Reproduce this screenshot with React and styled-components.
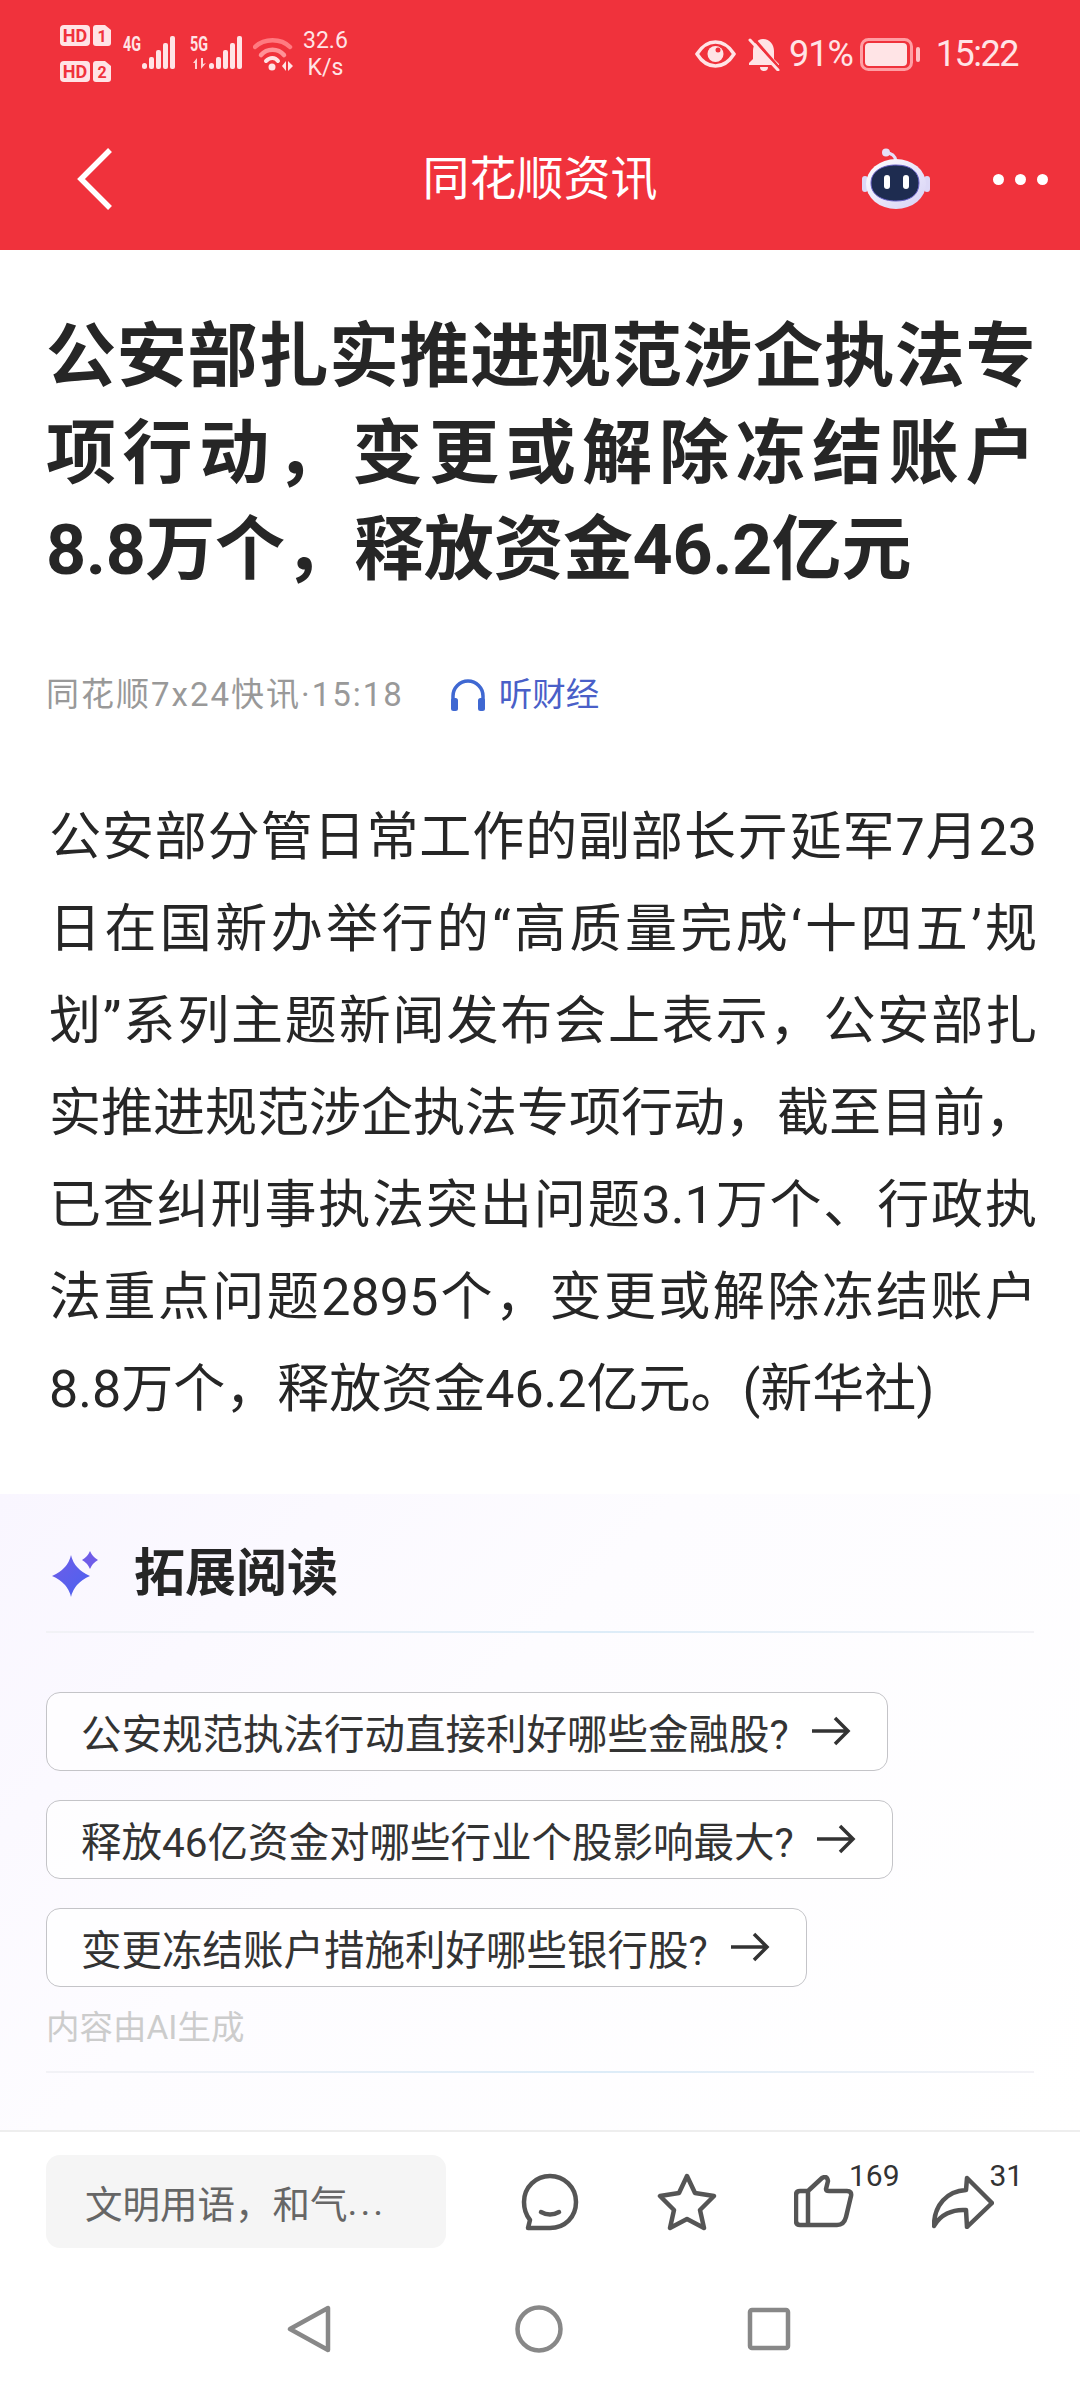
import styled, {createGlobalStyle} from "styled-components";

const GlobalStyle = createGlobalStyle`
  html, body {
    margin: 0;
    padding: 0;
    background: #fff;
  }
  * {
    box-sizing: border-box;
  }
`;

const FONT = `Roboto, "Noto Sans CJK SC", sans-serif`;

const Page = styled.div`
  display: flex;
  flex-direction: column;
  width: 1080px;
  height: 2388px;
  overflow: hidden;
  background: #fff;
  font-family: ${FONT};
`;

const Header = styled.header`
  display: flex;
  flex-direction: column;
  height: 250px;
  flex-shrink: 0;
  background: #f0323c;
  color: #fff;
`;

const StatusBar = styled.div`
  display: flex;
  justify-content: space-between;
  align-items: center;
  height: 108px;
  padding: 0 62px 0 60px;
  color: #ffe4e6;
`;

const StatusGroup = styled.div`
  display: flex;
  align-items: center;
  gap: ${(props) => props.gap || 0}px;
  margin-left: ${(props) => props.left || 0}px;
  margin-right: ${(props) => props.right || 0}px;
`;

const SignalGroup = styled.div`
  display: flex;
  align-items: center;
  gap: 13px;
  margin: 0 0 8px 12px;
`;

const SimStack = styled.div`
  display: flex;
  flex-direction: column;
  gap: 14px;
`;

const SpeedText = styled.div`
  display: flex;
  flex-direction: column;
  align-items: center;
  margin-left: 10px;
  font-size: 23px;
  line-height: 27px;
`;

const StatusText = styled.span`
  font-size: 36px;
  line-height: 40px;
  letter-spacing: ${(props) => props.spacing || 0}px;
`;

const NavBar = styled.nav`
  display: grid;
  grid-template-columns: 1fr auto 1fr;
  align-items: center;
  height: 142px;
  padding: 0 32px;
`;

const BackButton = styled.div`
  display: flex;
  padding-left: 45px;
`;

const NavTitle = styled.div`
  font-size: 47px;
  line-height: 60px;
`;

const NavRight = styled.div`
  display: flex;
  align-items: center;
  justify-content: flex-end;
  gap: 63px;
`;

const Dots = styled.div`
  display: flex;
  gap: 11px;
`;

const Dot = styled.span`
  width: 11px;
  height: 11px;
  border-radius: 50%;
  background: #fff;
`;

const Article = styled.article`
  padding: 59px 45px 58px 46px;
`;

const Title = styled.h1`
  margin: 0;
  font-size: 70px;
  line-height: 96.5px;
  font-weight: 700;
  letter-spacing: -0.4px;
  color: #262626;
  text-align: justify;
`;

const Meta = styled.div`
  display: flex;
  align-items: center;
  margin-top: 76px;
  font-size: 33px;
  line-height: 40px;
  color: #999;
`;

const MetaSource = styled.span`
  letter-spacing: 2px;
`;

const Listen = styled.div`
  display: flex;
  align-items: center;
  gap: 13px;
  margin-left: 46px;
  font-size: 33.5px;
  color: #4a5fc8;
`;

const Body = styled.p`
  margin: 77px -2px 0 3px;
  font-size: 52px;
  line-height: 92px;
  color: #262626;
  text-align: justify;
`;

const Extended = styled.section`
  flex: 1;
  padding: 0 46px;
  background: linear-gradient(135deg, #f9f6ff 0%, #fdfcff 40%, #fff 100%);
`;

const ExtendedHead = styled.div`
  display: flex;
  align-items: center;
  height: 137px;
  gap: 36px;
  padding-left: 6px;
  padding-top: 23px;
`;

const ExtendedTitle = styled.h2`
  margin: 0;
  font-size: 51px;
  line-height: 60px;
  font-weight: 700;
  color: #262626;
`;

const GlowLine = styled.div`
  height: 2px;
  background: linear-gradient(90deg, #f2f2f6 0%, #dcecf8 55%, #f2f2f6 100%);
`;

const Chips = styled.div`
  display: flex;
  flex-direction: column;
  align-items: flex-start;
  gap: 29px;
  margin-top: 59px;
`;

const Chip = styled.div`
  display: flex;
  align-items: center;
  gap: 22px;
  height: 79px;
  padding: 0 36px 0 34px;
  border: 1.5px solid #c4c4c8;
  border-radius: 14px;
  font-size: 40.5px;
  color: #333;
  background: rgba(255, 255, 255, 0.7);
`;

const AiNote = styled.div`
  margin: 21px 0 23px;
  font-size: 33.5px;
  line-height: 40px;
  color: #ccc;
`;

const BottomBar = styled.div`
  display: flex;
  align-items: flex-start;
  height: 140px;
  padding: 23px 0 0 46px;
  border-top: 2px solid #eee;
  flex-shrink: 0;
`;

const CommentInput = styled.div`
  display: flex;
  align-items: center;
  width: 400px;
  height: 93px;
  padding-left: 39px;
  border-radius: 14px;
  background: #f5f5f5;
  font-size: 37.5px;
  color: #666;
`;

const Ellipsis = styled.span`
  letter-spacing: 3px;
`;

const Actions = styled.div`
  display: flex;
  align-items: center;
  height: 93px;
  margin-left: 75px;
  gap: 77.5px;
`;

const Action = styled.div`
  position: relative;
  display: flex;
`;

const Count = styled.span`
  position: absolute;
  left: ${(props) => props.left}px;
  top: -16px;
  font-size: 30px;
  line-height: 34px;
  color: #333;
`;

const SystemNav = styled.div`
  display: flex;
  align-items: center;
  justify-content: center;
  gap: 184px;
  height: 118px;
  padding-right: 3px;
  flex-shrink: 0;
`;

function HdBadge({n}) {
    return (
        <svg width="51" height="22" viewBox="0 0 51 22" style={{display: "block"}}>
            <rect x="0" y="0" width="30" height="21" rx="4" fill="#ffe4e6"/>
            <text x="15" y="17" textAnchor="middle" fontFamily="Roboto" fontWeight="700" fontSize="18" fill="#f0323c">HD</text>
            <path d="M36 0h9l6 5v13a3 3 0 0 1-3 3H36a3 3 0 0 1-3-3V3a3 3 0 0 1 3-3z" fill="#ffe4e6"/>
            <text x="42" y="17" textAnchor="middle" fontFamily="Roboto" fontWeight="700" fontSize="16" fill="#f0323c">{n}</text>
        </svg>
    );
}

function Signal({label, arrows}) {
    return (
        <svg width="54" height="37" viewBox="0 -4 54 37">
            <text x="0" y="15" fontFamily="Roboto" fontWeight="700" fontSize="20" textLength="18" lengthAdjust="spacingAndGlyphs" fill="#ffe4e6">{label}</text>
            {arrows && <path d="M3 27l4-5v11H5v-6zM11 22h2v6l3-1-5 6z" fill="#ffe4e6" opacity="0.9"/>}
            <rect x="19" y="27" width="5" height="6" rx="2.5" fill="#ffe4e6"/>
            <rect x="26" y="21" width="5" height="12" rx="2" fill="#ffe4e6"/>
            <rect x="33" y="14" width="5" height="19" rx="2" fill="#ffe4e6"/>
            <rect x="40" y="7" width="5" height="26" rx="2" fill="#ffe4e6"/>
            <rect x="47" y="0" width="5" height="33" rx="2" fill="#ffe4e6"/>
        </svg>
    );
}

function Wifi() {
    return (
        <svg width="40" height="34" viewBox="0 0 40 34" fill="none">
            <path d="M2 10C11 1 28 1 37 10" stroke="#ff7a80" strokeWidth="4.5" strokeLinecap="round"/>
            <path d="M8 18C14 11 25 11 31 18" stroke="#ff9297" strokeWidth="4.5" strokeLinecap="round"/>
            <path d="M13 24C17 20 22 20 25 24" stroke="#ffe4e6" strokeWidth="4" strokeLinecap="round"/>
            <circle cx="19" cy="30" r="3.5" fill="#ffe4e6"/>
            <path d="M29 29l4-5v10zM35 24l5 5-5 5z" fill="#ffe4e6"/>
        </svg>
    );
}

function Eye() {
    return (
        <svg width="41" height="28" viewBox="0 0 41 28" fill="none">
            <path d="M2 14C7 6 13 2 20.5 2S34 6 39 14c-5 8-11 12-18.500 12S7 22 2 14z" stroke="#ffe4e6" strokeWidth="3.5"/>
            <circle cx="20.500" cy="14" r="8" fill="#ffe4e6"/>
            <circle cx="23" cy="10" r="2.500" fill="#f0323c"/>
        </svg>
    );
}

function Bell() {
    return (
        <svg width="32" height="33" viewBox="0 0 32 33" fill="none">
            <path d="M15 1c7 0 11 6 11 12v8l5 5v1H1v-2l4-4v-8C5 7 9 1 15 1z" fill="#ffe4e6"/>
            <path d="M12 29h8a4 4 0 0 1-8 0z" fill="#ffe4e6"/>
            <path d="M6 1l25 29" stroke="#f0323c" strokeWidth="3"/>
            <path d="M2 2l28 30" stroke="#ffe4e6" strokeWidth="3" strokeLinecap="round"/>
        </svg>
    );
}

function Battery() {
    return (
        <svg width="61" height="33" viewBox="0 0 61 33" fill="none">
            <rect x="1.500" y="1.500" width="50" height="30" rx="7" stroke="#ff9ea3" strokeWidth="3"/>
            <rect x="5" y="5" width="42" height="23" rx="4" fill="#ffe4e6"/>
            <rect x="56" y="9" width="4" height="15" rx="2" fill="#ffc2c5"/>
        </svg>
    );
}

function Back() {
    return (
        <svg width="36" height="64" viewBox="0 0 36 64" fill="none">
            <path d="M33 3L4 32l29 29" stroke="#fff" strokeWidth="5.500"/>
        </svg>
    );
}

function Robot() {
    return (
        <svg width="68" height="62" viewBox="0 0 68 62">
            <defs>
                <linearGradient id="shell" x1="0" y1="0" x2="1" y2="1">
                    <stop offset="0" stopColor="#ffffff"/>
                    <stop offset="1" stopColor="#d5d0f5"/>
                </linearGradient>
            </defs>
            <path d="M24 5c5 0 9 2 10 8" fill="none" stroke="#e6dff8" strokeWidth="3"/>
            <circle cx="24" cy="4.500" r="4" fill="#e6dff8"/>
            <rect x="0" y="28" width="6" height="16" rx="3" fill="#dcd8f6"/>
            <rect x="62" y="28" width="6" height="16" rx="3" fill="#dcd8f6"/>
            <ellipse cx="34" cy="36" rx="30" ry="25" fill="url(#shell)"/>
            <path d="M34 17c15 0 23 7 23 18 0 12-9 18-23 18S9 47 9 35c0-11 10-18 25-18z" fill="#1e2c50" stroke="#6a62c8" strokeWidth="1"/>
            <rect x="22" y="27" width="6" height="14" rx="3" fill="#fff"/>
            <rect x="41" y="27" width="6" height="14" rx="3" fill="#fff"/>
        </svg>
    );
}

function Headphones() {
    return (
        <svg width="36" height="34" viewBox="0 0 36 34" fill="none">
            <path d="M3 24V18a15 15 0 0 1 30 0v6" stroke="#3f68d2" strokeWidth="3.500"/>
            <rect x="1" y="20" width="7" height="13" rx="2.500" fill="#3f68d2"/>
            <rect x="28" y="20" width="7" height="13" rx="2.500" fill="#3f68d2"/>
        </svg>
    );
}

function Sparkle() {
    return (
        <svg width="46" height="46" viewBox="0 0 46 46">
            <defs>
                <linearGradient id="spark" x1="0" y1="0" x2="1" y2="1">
                    <stop offset="0" stopColor="#6f5ce8"/>
                    <stop offset="1" stopColor="#4a63f0"/>
                </linearGradient>
            </defs>
            <path d="M19 4q3 14 19 21-16 7-19 21-3-14-19-21 16-7 19-21z" fill="url(#spark)"/>
            <path d="M38 0q2.500 6 8 9-5.500 3-8 9-2.500-6-8-9 5.500-3 8-9z" fill="#6f5ce8"/>
        </svg>
    );
}

function Arrow() {
    return (
        <svg width="40" height="32" viewBox="0 0 40 32" fill="none">
            <path d="M1 16h36M24 3l13 13-13 13" stroke="#333" strokeWidth="3.500"/>
        </svg>
    );
}

function CommentIcon() {
    return (
        <svg width="58" height="58" viewBox="0 0 58 58" fill="none" stroke="#555" strokeWidth="4.500" strokeLinecap="round" strokeLinejoin="round">
            <path d="M29 3c14 0 26 11 26 26S44 55 29 55H7l2-8C5 42 3 36 3 29 3 14 15 3 29 3z"/>
            <path d="M20 39q9 5 18 0"/>
        </svg>
    );
}

function StarIcon() {
    return (
        <svg width="60" height="58" viewBox="0 0 60 58" fill="none" stroke="#555" strokeWidth="4.500" strokeLinejoin="round">
            <path d="M30 3l8 17 19 3-14 14 4 18-17-9-17 9 4-18L3 23l19-3z"/>
        </svg>
    );
}

function ThumbIcon() {
    return (
        <svg width="60" height="54" viewBox="0 0 60 54" fill="none" stroke="#555" strokeWidth="4.500" strokeLinejoin="round">
            <path d="M14 16L28 3q5-3 6 3l-2 8q0 2 3 2h18q5 0 4 5l-5 21q-2 8-9 8H6q-4 0-4-4V20q0-4 4-4h8zM14 16v34"/>
        </svg>
    );
}

function ShareIcon() {
    return (
        <svg width="62" height="54" viewBox="0 0 62 54" fill="none" stroke="#555" strokeWidth="4.500" strokeLinejoin="round">
            <path d="M35 3l25 25-25 24-1-17C20 34 8 40 2 51 2 30 15 16 34 15z"/>
        </svg>
    );
}

function NavBack() {
    return (
        <svg width="44" height="48" viewBox="0 0 44 48" fill="none" stroke="#888" strokeWidth="4.500" strokeLinejoin="round">
            <path d="M41 3v42L3 24z"/>
        </svg>
    );
}

function NavHome() {
    return (
        <svg width="48" height="48" viewBox="0 0 48 48" fill="none" stroke="#888" strokeWidth="4.500">
            <circle cx="24" cy="24" r="21.500"/>
        </svg>
    );
}

function NavRecent() {
    return (
        <svg width="44" height="44" viewBox="0 0 44 44" fill="none" stroke="#888" strokeWidth="4.500">
            <rect x="3" y="3" width="38" height="38" rx="2"/>
        </svg>
    );
}

const questions = [
    "公安规范执法行动直接利好哪些金融股?",
    "释放46亿资金对哪些行业个股影响最大?",
    "变更冻结账户措施利好哪些银行股?",
];

export default function App() {
    return (
        <Page>
            <GlobalStyle/>
            <Header>
                <StatusBar>
                    <StatusGroup>
                        <SimStack>
                            <HdBadge n="1"/>
                            <HdBadge n="2"/>
                        </SimStack>
                        <SignalGroup>
                            <Signal label="4G"/>
                            <Signal label="5G" arrows/>
                        </SignalGroup>
                        <StatusGroup left={9}><Wifi/></StatusGroup>
                        <SpeedText>
                            <span>32.6</span>
                            <span>K/s</span>
                        </SpeedText>
                    </StatusGroup>
                    <StatusGroup>
                        <Eye/>
                        <StatusGroup left={12}><Bell/></StatusGroup>
                        <StatusGroup left={9} right={7}><StatusText spacing={-1}>91%</StatusText></StatusGroup>
                        <Battery/>
                        <StatusGroup left={15}><StatusText spacing={-1.5}>15:22</StatusText></StatusGroup>
                    </StatusGroup>
                </StatusBar>
                <NavBar>
                    <BackButton><Back/></BackButton>
                    <NavTitle>同花顺资讯</NavTitle>
                    <NavRight>
                        <Robot/>
                        <Dots>
                            <Dot/>
                            <Dot/>
                            <Dot/>
                        </Dots>
                    </NavRight>
                </NavBar>
            </Header>
            <Article>
                <Title>公安部扎实推进规范涉企执法专项行动，变更或解除冻结账户8.8万个，释放资金46.2亿元</Title>
                <Meta>
                    <MetaSource>同花顺7x24快讯·15:18</MetaSource>
                    <Listen>
                        <Headphones/>
                        <span>听财经</span>
                    </Listen>
                </Meta>
                <Body>公安部分管日常工作的副部长亓延军7月23日在国新办举行的“高质量完成‘十四五’规划”系列主题新闻发布会上表示，公安部扎实推进规范涉企执法专项行动，截至目前，已查纠刑事执法突出问题3.1万个、行政执法重点问题2895个，变更或解除冻结账户8.8万个，释放资金46.2亿元。(新华社)</Body>
            </Article>
            <Extended>
                <ExtendedHead>
                    <Sparkle/>
                    <ExtendedTitle>拓展阅读</ExtendedTitle>
                </ExtendedHead>
                <GlowLine/>
                <Chips>
                    {questions.map((question) => (
                        <Chip key={question}>
                            <span>{question}</span>
                            <Arrow/>
                        </Chip>
                    ))}
                </Chips>
                <AiNote>内容由AI生成</AiNote>
                <GlowLine/>
            </Extended>
            <BottomBar>
                <CommentInput>文明用语，和气<Ellipsis>...</Ellipsis></CommentInput>
                <Actions>
                    <Action><CommentIcon/></Action>
                    <Action><StarIcon/></Action>
                    <Action>
                        <ThumbIcon/>
                        <Count left={55}>169</Count>
                    </Action>
                    <Action>
                        <ShareIcon/>
                        <Count left={58}>31</Count>
                    </Action>
                </Actions>
            </BottomBar>
            <SystemNav>
                <NavBack/>
                <NavHome/>
                <NavRecent/>
            </SystemNav>
        </Page>
    );
}
